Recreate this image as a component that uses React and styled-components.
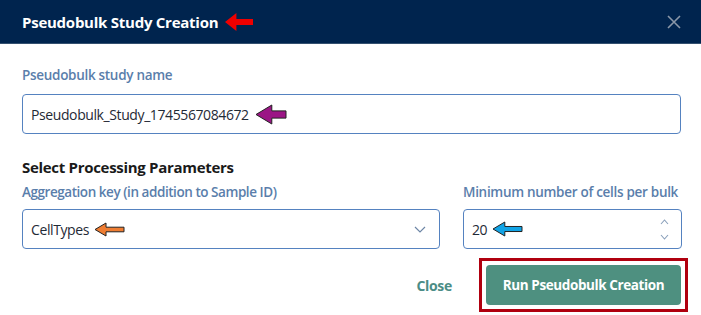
import React from "react";
import styled, { createGlobalStyle } from "styled-components";

const Global = createGlobalStyle`
  html, body { margin: 0; padding: 0; background: #fff; }
  body { font-family: "Open Sans", "Noto Sans", sans-serif; }
  * { box-sizing: border-box; }
`;

const Dialog = styled.div`
  width: 701px;
  height: 315px;
  background: #fff;
  display: flex;
  flex-direction: column;
`;

const Header = styled.div`
  height: 44px;
  background: #00244e;
  border-bottom: 1px solid #34506f;
  display: flex;
  align-items: center;
  justify-content: space-between;
  padding: 0 20px 0 22px;
`;

const Title = styled.div`
  display: flex;
  align-items: center;
  gap: 6px;
  color: #fff;
  font-weight: 700;
  font-size: 15px;
  letter-spacing: -0.25px;
`;

const CloseX = styled.svg`
  width: 14px;
  height: 14px;
  display: block;
`;

const Body = styled.div`
  padding: 22px 20px 0 22px;
  display: flex;
  flex-direction: column;
`;

const Label = styled.div`
  color: #5a7eab;
  font-weight: 600;
  font-size: 13.5px;
  line-height: 18px;
  letter-spacing: ${(p) => p.$ls || -0.3}px;
  margin-bottom: ${(p) => p.$mb || 9}px;
  white-space: nowrap;
`;

const Field = styled.div`
  height: ${(p) => p.$h || 40}px;
  border: 1px solid #5582c0;
  border-radius: 4px;
  display: flex;
  align-items: center;
  padding: 0 13px 0 8px;
  gap: ${(p) => p.$gap || 5}px;
  color: #1f2a36;
  font-size: 14px;
  letter-spacing: -0.4px;
`;

const FieldText = styled.span`
  white-space: nowrap;
`;

const Spacer = styled.div`
  flex: 1;
`;

const Heading = styled.div`
  margin-top: 23px;
  margin-bottom: 6px;
  font-weight: 700;
  font-size: 15px;
  line-height: 20px;
  color: #1a1a1a;
  letter-spacing: -0.3px;
`;

const Row = styled.div`
  display: grid;
  grid-template-columns: 418px 219px;
  gap: 23px;
`;

const Col = styled.div`
  display: flex;
  flex-direction: column;
`;

const Footer = styled.div`
  display: flex;
  justify-content: flex-end;
  align-items: center;
  gap: 27px;
  margin-top: 9px;
  margin-right: -7px;
`;

const TextButton = styled.button`
  border: none;
  background: none;
  color: #4b8d86;
  font-family: inherit;
  font-weight: 700;
  font-size: 14px;
  letter-spacing: -0.3px;
  padding: 0;
`;

const Highlight = styled.div`
  border: 3px solid #b0000f;
  padding: 4px;
  display: flex;
`;

const PrimaryButton = styled.button`
  width: 195px;
  height: 40px;
  border: none;
  border-radius: 4px;
  background: #4e9080;
  color: #fff;
  font-family: inherit;
  font-weight: 700;
  font-size: 13.5px;
  letter-spacing: -0.4px;
`;

const ArrowSvg = styled.svg`
  display: block;
  flex: none;
`;

function Arrow({ color, w = 30, h = 18, stroke, tail = 0.28, head = 0.8 }) {
  const hw = h * head;
  const t = h * tail;
  const mid = h / 2;
  const d = `M1 ${mid} L${hw} 1 L${hw} ${t + 1} L${w - 1} ${t + 1} L${w - 1} ${h - t - 1} L${hw} ${h - t - 1} L${hw} ${h - 1} Z`;
  return (
    <ArrowSvg width={w} height={h} viewBox={`0 0 ${w} ${h}`}>
      <path d={d} fill={color} stroke={stroke || "none"} strokeWidth="1" strokeLinejoin="miter" />
    </ArrowSvg>
  );
}

const Chevron = () => (
  <svg width="12" height="7" viewBox="0 0 12 7">
    <path d="M1 1 L6 6 L11 1" fill="none" stroke="#6d86a6" strokeWidth="1.2" />
  </svg>
);

const Spinner = styled.div`
  display: flex;
  flex-direction: column;
  gap: 9px;
  margin-right: -1px;
  svg { width: 9px; height: 6px; display: block; }
`;

export default function App() {
  return (
    <>
      <Global />
      <Dialog>
        <Header>
          <Title>
            Pseudobulk Study Creation
            <Arrow color="#ee0000" w={30} h={20} tail={0.3} head={0.62} />
          </Title>
          <CloseX viewBox="0 0 14 14">
            <path d="M1 1 L13 13 M13 1 L1 13" stroke="#8a97a8" strokeWidth="1.6" />
          </CloseX>
        </Header>
        <Body>
          <Label $mb={10}>Pseudobulk study name</Label>
          <Field $h={40} $gap={6}>
            <FieldText>Pseudobulk_Study_1745567084672</FieldText>
            <Arrow color="#9b1585" stroke="#222" w={32} h={21} />
          </Field>
          <Heading>Select Processing Parameters</Heading>
          <Row>
            <Col>
              <Label $mb={8} $ls={-0.45}>Aggregation key (in addition to Sample ID)</Label>
              <Field>
                <FieldText>CellTypes</FieldText>
                <Arrow color="#ef7d32" stroke="#222" w={31} h={15} />
                <Spacer />
                <Chevron />
              </Field>
            </Col>
            <Col>
              <Label $mb={8}>Minimum number of cells per bulk</Label>
              <Field>
                <FieldText>20</FieldText>
                <Arrow color="#12a4e6" stroke="#222" w={31} h={16} />
                <Spacer />
                <Spinner>
                  <svg viewBox="0 0 9 6"><path d="M1 5 L4.5 1 L8 5" fill="none" stroke="#8aa0bb" strokeWidth="1.1" /></svg>
                  <svg viewBox="0 0 9 6"><path d="M1 1 L4.5 5 L8 1" fill="none" stroke="#8aa0bb" strokeWidth="1.1" /></svg>
                </Spinner>
              </Field>
            </Col>
          </Row>
          <Footer>
            <TextButton>Close</TextButton>
            <Highlight>
              <PrimaryButton>Run Pseudobulk Creation</PrimaryButton>
            </Highlight>
          </Footer>
        </Body>
      </Dialog>
    </>
  );
}
